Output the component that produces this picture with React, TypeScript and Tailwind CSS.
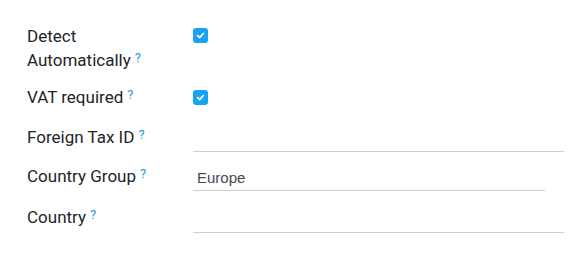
import React from 'react';

const Help: React.FC = () => (
  <sup className="ml-[4px] text-[13px] font-normal text-[#1f9bd1] relative -top-[4px]">?</sup>
);

const Check: React.FC = () => (
  <span className="flex h-[15px] w-[15px] items-center justify-center rounded-[3px] bg-[#17a2f5]">
    <svg width="9" height="9" viewBox="0 0 10 10" fill="none">
      <path d="M1.8 5.2 L4 7.3 L8.2 2.8" stroke="white" strokeWidth="1.9" strokeLinecap="round" strokeLinejoin="round" />
    </svg>
  </span>
);

const labelCls = "w-[166px] shrink-0 text-[17px] leading-6 text-[#212529]";

export default function App() {
  return (
    <div
      className="w-[583px] h-[261px] bg-white pl-[27px] pt-[24px]"
      style={{ fontFamily: 'Roboto, "Noto Sans", sans-serif' }}
    >
      <div className="flex">
        <div className={labelCls}>
          Detect
          <br />
          Automatically<Help />
        </div>
        <div className="pt-[4px]">
          <Check />
        </div>
      </div>

      <div className="mt-[13px] flex">
        <div className={labelCls}>
          VAT required<Help />
        </div>
        <div className="pt-[5px]">
          <Check />
        </div>
      </div>

      <div className="mt-[14px] flex">
        <div className={`${labelCls} pt-[2px]`}>
          Foreign Tax ID<Help />
        </div>
        <div className="h-[29px] w-[371px] border-b border-[#cfcfcf]" />
      </div>

      <div className="mt-[10px] flex">
        <div className={`${labelCls} pt-[2px]`}>
          Country Group<Help />
        </div>
        <div className="h-[29px] w-[352px] border-b border-[#cfcfcf] pl-[4px] pt-[4px] text-[15px] leading-6 text-[#444b52]"
          style={{ fontFamily: '"Liberation Sans", Arial, sans-serif' }}>
          Europe
        </div>
      </div>

      <div className="mt-[12px] flex">
        <div className={`${labelCls} pt-[2px]`}>
          Country<Help />
        </div>
        <div className="h-[30px] w-[371px] border-b border-[#cfcfcf]" />
      </div>
    </div>
  );
}
